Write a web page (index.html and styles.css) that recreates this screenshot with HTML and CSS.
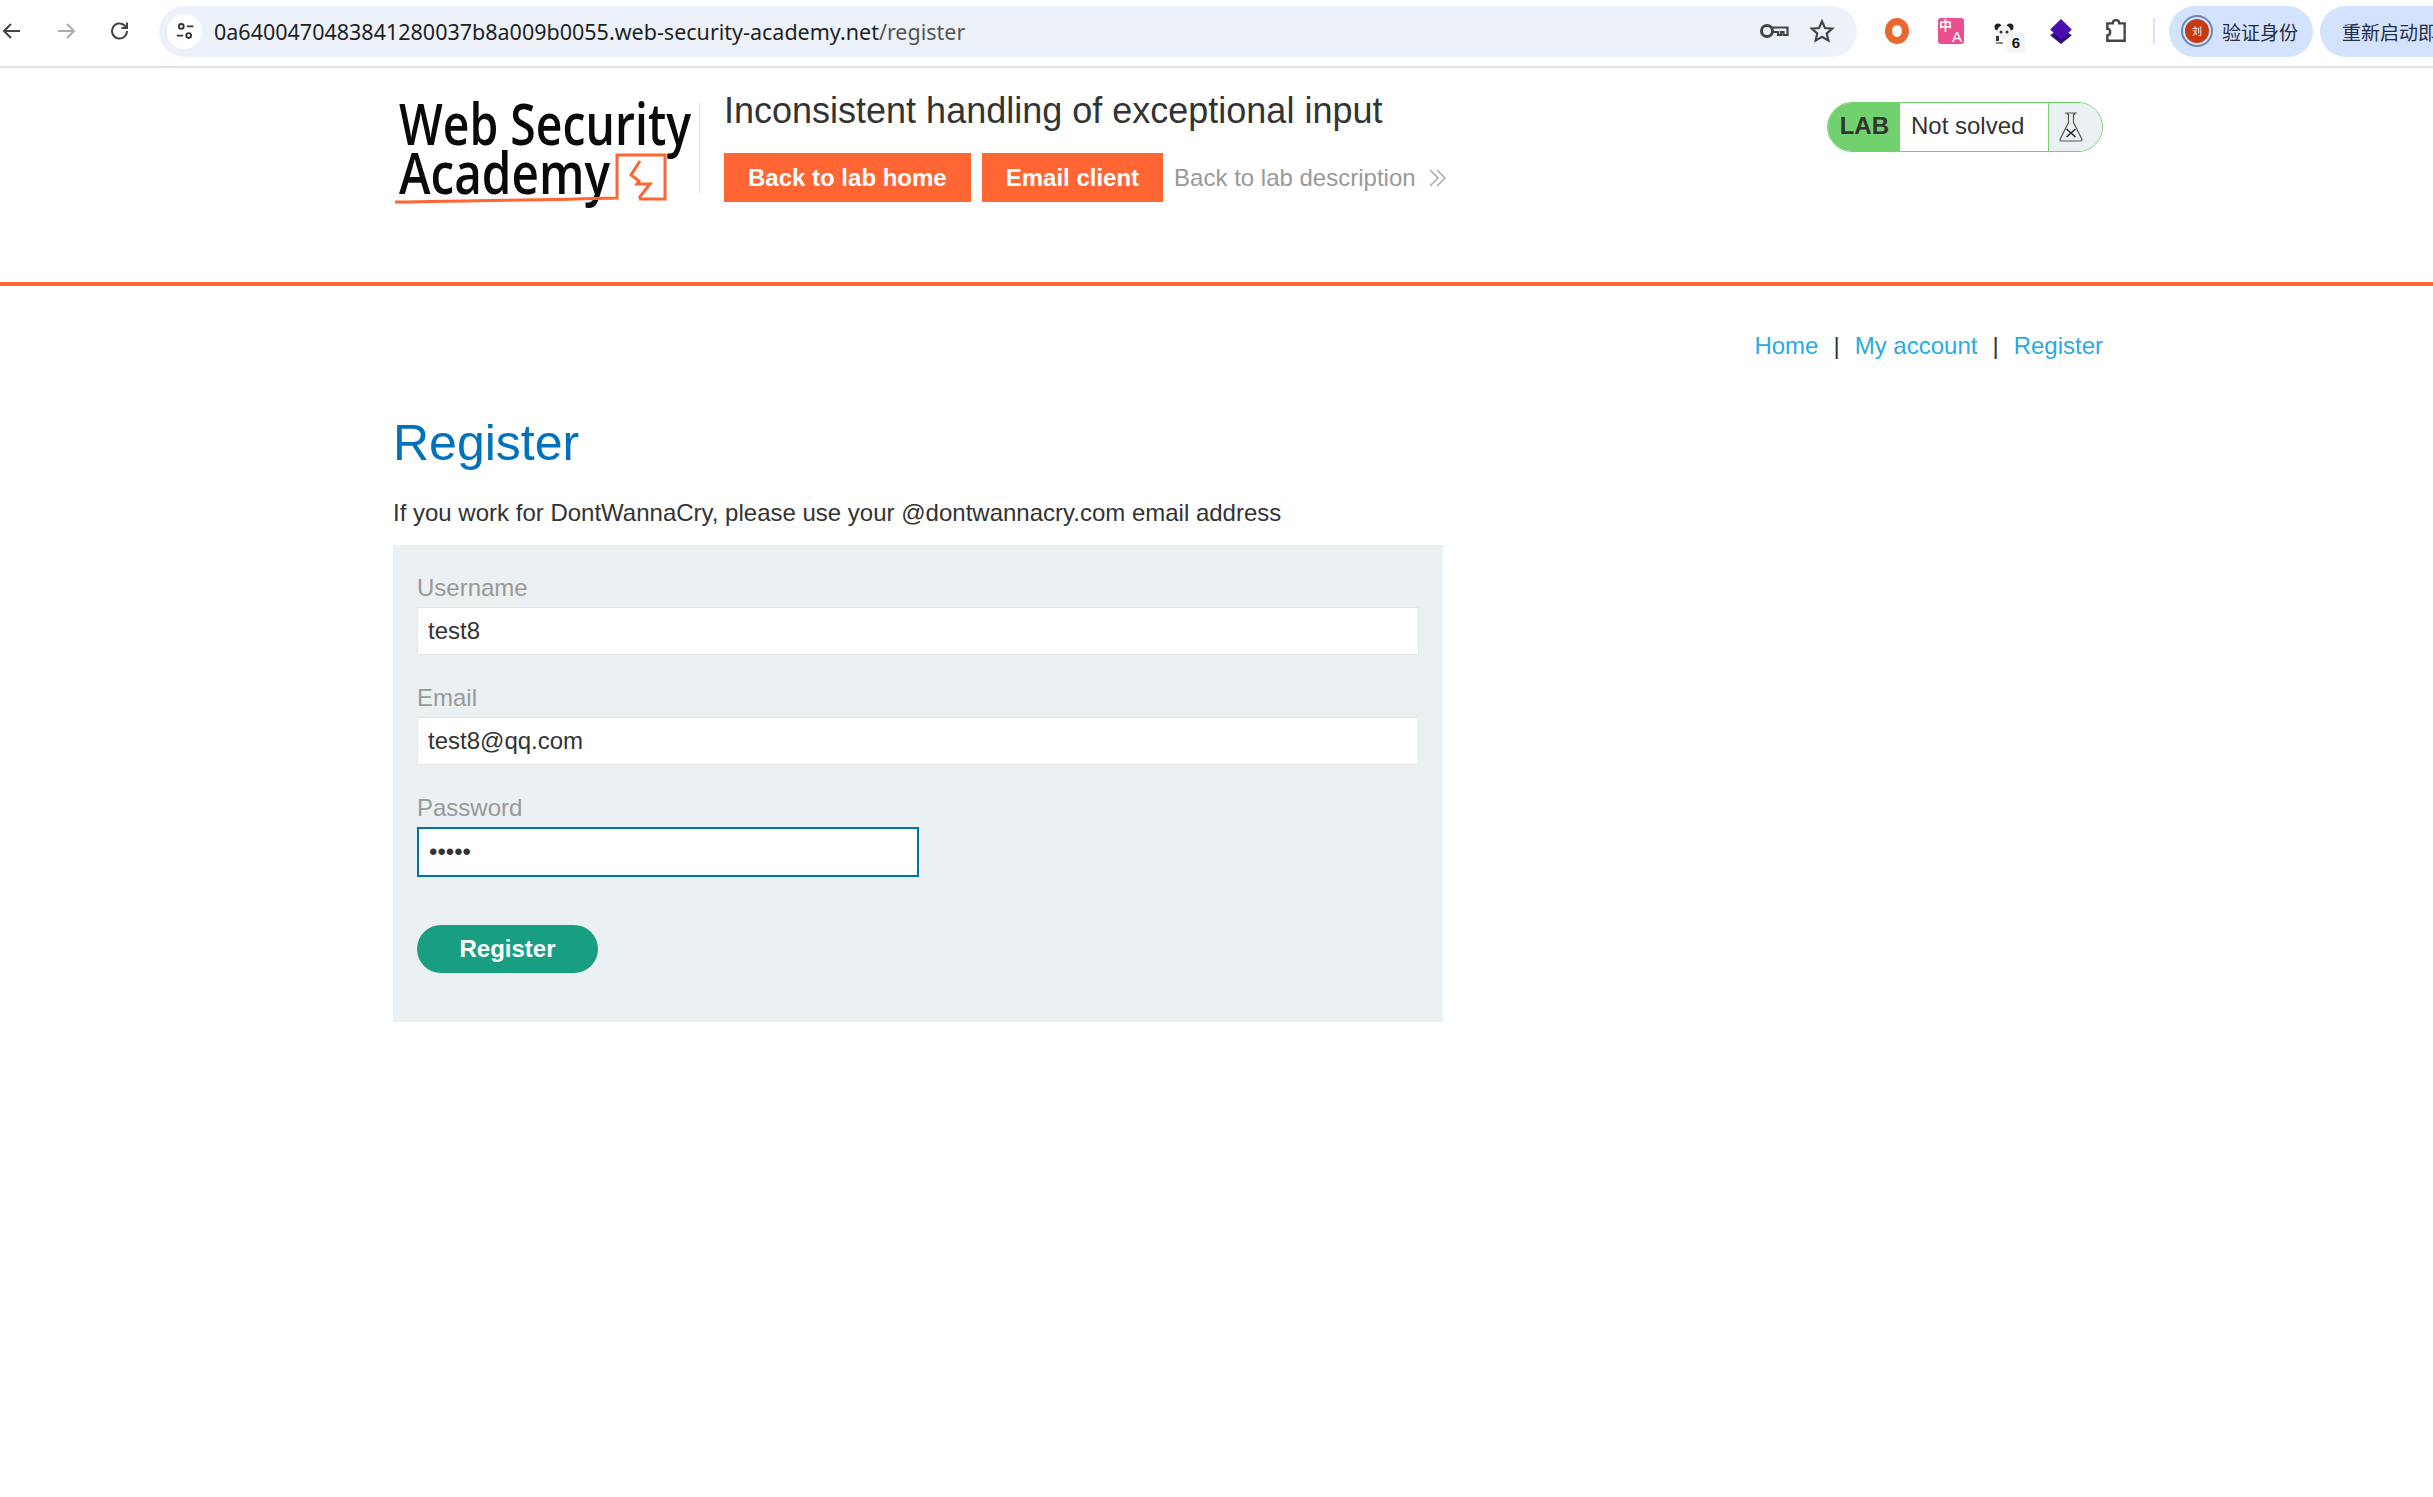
FILE: index.html
```html
<!DOCTYPE html>
<html lang="en">
<head>
    <meta charset="UTF-8">
    <meta name="viewport" content="width=device-width, initial-scale=1.0">
    <title>Register</title>
    <link rel="stylesheet" href="styles.css">
</head>
<body>

<!-- Browser toolbar -->
<div class="toolbar">
    <svg class="tool-icon back" viewBox="0 0 24 24"><path d="M20 12H5M11 5l-7 7 7 7" fill="none" stroke="#444" stroke-width="2"/></svg>
    <svg class="tool-icon forward" viewBox="0 0 24 24"><path d="M4 12h15M13 5l7 7-7 7" fill="none" stroke="#aaa" stroke-width="2"/></svg>
    <svg class="tool-icon reload" viewBox="0 0 24 24"><path d="M19 12a7.5 7.5 0 1 1-2.4-5.5L19 9M19 3.5V9h-5.5" fill="none" stroke="#444" stroke-width="2"/></svg>
    <div class="url-bar">
        <span class="site-info">
            <svg viewBox="0 0 24 24" width="24" height="24"><circle cx="8" cy="7" r="2.6" fill="none" stroke="#333" stroke-width="2"/><path d="M14 7h7M3 17h7" stroke="#333" stroke-width="2"/><circle cx="16" cy="17" r="2.6" fill="none" stroke="#333" stroke-width="2"/></svg>
        </span>
        <span class="url">0a6400470483841280037b8a009b0055.web-security-academy.net<span class="url-path">/register</span></span>
        <svg class="bar-icon key" viewBox="0 0 30 20"><circle cx="8" cy="10" r="5.5" fill="none" stroke="#444" stroke-width="3"/><path d="M13 6.500h15.500v7.500h-4v-3h-2.500v3h-3v-3H13" fill="none" stroke="#444" stroke-width="2.200"/></svg>
        <svg class="bar-icon star" viewBox="0 0 24 24"><path d="M12 3l2.7 6.2 6.8.6-5.1 4.5 1.5 6.6L12 17.400l-5.900 3.500 1.500-6.600-5.100-4.500 6.800-.6z" fill="none" stroke="#444" stroke-width="2"/></svg>
    </div>
    <div class="extensions">
        <span class="ext ext-ring"></span>
        <span class="ext ext-translate"><span class="zh">中</span><span class="en">A</span></span>
        <span class="ext ext-panda">
            <svg viewBox="0 0 24 24" width="24" height="24"><circle cx="5" cy="5" r="3.500" fill="#222"/><circle cx="17" cy="5" r="3.500" fill="#222"/><circle cx="11" cy="10" r="7" fill="#f2f2f2"/><circle cx="8" cy="10" r="1.500" fill="#333"/><circle cx="14" cy="10" r="1.500" fill="#333"/><rect x="3" y="14" width="3" height="5" fill="#333"/><rect x="3" y="20" width="7" height="2" fill="#888"/></svg>
            <span class="ext-count">6</span>
        </span>
        <svg class="ext" viewBox="0 0 24 24"><path d="M12 9l10 7-10 8L2 16z" fill="#2a1080"/><path d="M12 1l10 9.500L12 20 2 10.500z" fill="#4a0db0"/></svg>
        <svg class="ext" viewBox="0 0 24 24"><path d="M4 5h5c0-4 6-4 6 0h5v16H4v-5c3.500 0 3.500-6 0-6z" fill="none" stroke="#444" stroke-width="2.200"/></svg>
    </div>
    <span class="toolbar-divider"></span>
    <div class="pill verify">
        <span class="avatar">刘</span>
        <span>验证身份</span>
    </div>
    <div class="pill restart">重新启动即可更新</div>
</div>

<!-- Lab header -->
<div class="lab-header">
    <div class="container lab-header-inner">
        <svg class="logo" viewBox="0 0 306 112">
            <text class="logo-text" x="6" y="50" textLength="292" lengthAdjust="spacingAndGlyphs">Web Security</text>
            <text class="logo-text" x="6" y="99" textLength="211" lengthAdjust="spacingAndGlyphs">Academy</text>
            <path d="M2 107c70-1 150-2 222-4V60h48v44h-26" fill="none" stroke="#ff6633" stroke-width="3"/>
            <path d="M247 66l-9 14 8 6-2 3h13l-11 14" fill="none" stroke="#ff6633" stroke-width="3"/>
        </svg>
        <span class="logo-sep"></span>
        <div class="lab-title">
            <h2>Inconsistent handling of exceptional input</h2>
            <div class="lab-links">
                <a class="lab-btn">Back to lab home</a>
                <a class="lab-btn">Email client</a>
                <a class="lab-back">Back to lab description
                    <svg viewBox="0 0 20 20" width="20" height="20"><path d="M2 2l8 8-8 8M9 2l8 8-8 8" fill="none" stroke="#aaa" stroke-width="1.500"/></svg>
                </a>
            </div>
        </div>
        <div class="lab-status">
            <span class="status-lab">LAB</span>
            <span class="status-text">Not solved</span>
            <span class="status-icon">
                <svg viewBox="0 0 26 32" width="26" height="32"><path d="M7 2h12M9.500 2v1.500h1v8L2 28.500c0 .8.500 1.500 1.200 1.500h19.600c.7 0 1.200-.7 1.200-1.500L15.500 11.500v-8h1V2" fill="none" stroke="#555" stroke-width="1.200"/><path d="M8.500 18l9 8M17.500 18l-9 8" stroke="#222" stroke-width="1.500"/></svg>
            </span>
        </div>
    </div>
</div>

<!-- Main page -->
<div class="container">
    <div class="site-nav">
        <a>Home</a><span class="sep">|</span><a>My account</a><span class="sep">|</span><a>Register</a>
    </div>
    <h1>Register</h1>
    <p class="note">If you work for DontWannaCry, please use your @dontwannacry.com email address</p>
    <form class="register-form">
        <label for="username">Username</label>
        <input id="username" type="text" value="test8">
        <label for="email">Email</label>
        <input id="email" type="text" value="test8@qq.com">
        <label for="password">Password</label>
        <input id="password" class="focused" type="password" value="test8">
        <button type="button" class="register-btn">Register</button>
    </form>
</div>

</body>
</html>
```

FILE: styles.css
```css
html, body {
    height: 100%;
}

body {
    font-family: 'Liberation Sans', Arial, sans-serif;
    font-size: 24px;
    color: #333332;
    background-color: #fff;
    margin: 0;
    overflow: hidden;
}

/* Browser toolbar */
.toolbar {
    display: flex;
    align-items: center;
    box-sizing: content-box;
    height: 62px;
    padding-bottom: 4px;
    border-bottom: 2px solid #e2e2e2;
    white-space: nowrap;
    overflow: hidden;
    font-family: 'Noto Sans CJK SC', 'Noto Sans', sans-serif;
}

.tool-icon {
    width: 24px;
    height: 24px;
    flex: none;
}

.back {
    margin-left: 0;
}

.forward {
    margin-left: 30px;
}

.reload {
    margin-left: 30px;
}

.url-bar {
    display: flex;
    align-items: center;
    width: 1698px;
    height: 51px;
    margin-left: 27px;
    flex: none;
    background-color: #edf2fa;
    border-radius: 26px;
}

.site-info {
    display: flex;
    align-items: center;
    justify-content: center;
    width: 35px;
    height: 35px;
    margin-left: 8px;
    background-color: #fff;
    border-radius: 50%;
}

.site-info svg {
    width: 22px;
    height: 22px;
}

.url {
    flex: 1;
    margin-left: 12px;
    font-family: 'Noto Sans', sans-serif;
    font-size: 21.500px;
    color: #1f1f1f;
}

.url-path {
    color: #555;
}

.bar-icon {
    flex: none;
}

.key {
    width: 30px;
    height: 20px;
    margin-right: 20px;
}

.star {
    width: 26px;
    height: 26px;
    margin-right: 22px;
}

.extensions {
    display: flex;
    align-items: center;
    gap: 29px;
    margin-left: 28px;
    flex: none;
}

.ext {
    display: block;
    width: 26px;
    height: 26px;
    flex: none;
}

.ext-ring {
    box-sizing: border-box;
    width: 24px;
    height: 26px;
    border: 7px solid #e8692f;
    border-radius: 50%;
}

.ext-translate {
    position: relative;
    background-color: #ea4f8f;
    color: #fff;
    border-radius: 3px;
    font-weight: 700;
}

.zh {
    position: absolute;
    left: 1px;
    top: 0;
    font-size: 13px;
    line-height: 14px;
}

.en {
    position: absolute;
    right: 2px;
    bottom: 0;
    font-family: 'Liberation Sans', sans-serif;
    font-size: 15px;
    line-height: 15px;
    font-weight: 400;
}

.ext-panda {
    position: relative;
}

.ext-count {
    position: absolute;
    right: -6px;
    bottom: -9px;
    width: 18px;
    height: 20px;
    background-color: #f4f4f4;
    border-radius: 4px;
    color: #111;
    font-family: 'Liberation Sans', sans-serif;
    font-size: 15px;
    line-height: 20px;
    text-align: center;
    font-weight: 700;
}

.toolbar-divider {
    width: 2px;
    height: 26px;
    margin-left: 24px;
    flex: none;
    background-color: #d3e3fd;
}

.pill {
    display: flex;
    align-items: center;
    height: 51px;
    flex: none;
    background-color: #d3e3fd;
    border-radius: 26px;
    font-size: 19px;
    color: #1f2d45;
}

.verify {
    width: 144px;
    margin-left: 14px;
    gap: 13px;
    padding-left: 16px;
    box-sizing: border-box;
}

.restart {
    margin-left: 7px;
    padding-left: 22px;
    width: 200px;
}

.avatar {
    box-sizing: border-box;
    width: 24px;
    height: 24px;
    background-color: #c63a10;
    border-radius: 50%;
    color: #fff;
    font-size: 10px;
    line-height: 24px;
    text-align: center;
    box-shadow: 0 0 0 2px #d3e3fd, 0 0 0 4px #6a87b5;
}

/* Lab header */
.container {
    width: 1710px;
    margin-left: 393px;
}

.lab-header {
    height: 214px;
    border-bottom: 4px solid #ff6633;
}

.lab-header-inner {
    display: flex;
    align-items: flex-start;
}

.logo {
    width: 306px;
    height: 112px;
    margin-top: 27px;
    flex: none;
    overflow: visible;
}

.logo-text {
    font-family: 'Open Sans', sans-serif;
    font-size: 57px;
    font-weight: 600;
    fill: #0a0a0a;
}

.logo-sep {
    width: 1px;
    height: 92px;
    margin-top: 34px;
    flex: none;
    background-color: #e6e6e6;
}

.lab-title {
    flex: 1;
    margin-left: 24px;
}

.lab-title h2 {
    margin: 21px 0 0;
    font-size: 36px;
    font-weight: 400;
    line-height: 44px;
}

.lab-links {
    display: flex;
    align-items: center;
    gap: 11px;
    margin-top: 20px;
}

.lab-btn {
    padding: 0 24px;
    line-height: 49px;
    background-color: #ff6633;
    color: #fff;
    font-weight: 700;
}

.lab-back {
    display: flex;
    align-items: center;
    gap: 12px;
    color: #999;
}

.lab-status {
    display: flex;
    align-items: stretch;
    box-sizing: border-box;
    height: 50px;
    margin-top: 34px;
    border: 1.500px solid #70d16d;
    border-radius: 25px;
    overflow: hidden;
    line-height: 46px;
}

.status-lab {
    padding: 0 11px 0 12px;
    background-color: #70d16d;
    font-weight: 700;
}

.status-text {
    width: 148px;
    padding-left: 11px;
    box-sizing: border-box;
}

.status-icon {
    display: flex;
    align-items: center;
    justify-content: center;
    box-sizing: border-box;
    width: 54px;
    padding-right: 10px;
    border-left: 1.500px solid #70d16d;
    background-color: #ebf0f2;
}

/* Main page */
.site-nav {
    display: flex;
    justify-content: flex-end;
    margin-top: 46px;
    line-height: 28px;
    color: #333332;
}

.site-nav a {
    color: #29abe2;
}

.sep {
    margin: 0 15px;
}

h1 {
    margin: 52px 0 0;
    font-size: 50px;
    font-weight: 400;
    line-height: 62px;
    color: #0071bc;
}

.note {
    margin: 24px 0 0;
    line-height: 30px;
}

.register-form {
    box-sizing: border-box;
    width: 1050px;
    height: 477px;
    margin-top: 17px;
    padding: 29px 24px 0;
    background-color: #ebf0f2;
}

.register-form label {
    display: block;
    line-height: 28px;
    color: #999;
}

.register-form input {
    display: block;
    box-sizing: border-box;
    width: 100%;
    height: 48px;
    margin: 5px 0 29px;
    padding: 0 10px;
    background-color: #fff;
    border: 1.500px solid #e6e6e6;
    border-radius: 0;
    font-family: 'Liberation Sans', Arial, sans-serif;
    font-size: 24px;
    color: #333332;
}

.register-form input.focused {
    width: 502px;
    height: 50px;
    margin-bottom: 48px;
    border: 2px solid #0071bc;
}

.register-btn {
    display: block;
    width: 181px;
    height: 48px;
    padding: 0;
    background-color: #189e80;
    border: none;
    border-radius: 24px;
    color: #fff;
    font-family: 'Liberation Sans', Arial, sans-serif;
    font-size: 24px;
    font-weight: 700;
}
```
